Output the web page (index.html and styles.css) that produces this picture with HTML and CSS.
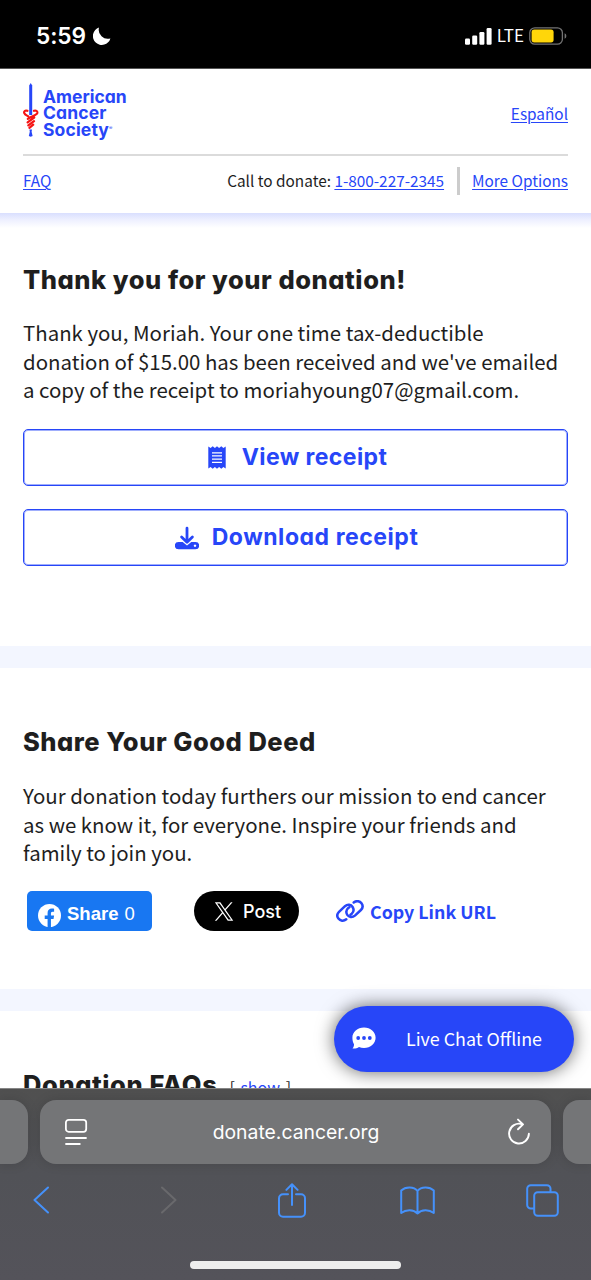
FILE: index.html
```html
<!DOCTYPE html>
<html lang="en">
<head>
<meta charset="utf-8">
<title>Thank you for your donation</title>
<link rel="stylesheet" href="styles.css">
</head>
<body>
<div class="phone">
  <div class="status">
    <div class="status-time"><span class="clock">5:59</span>
      <svg class="moon" viewBox="0 0 18 18"><path d="M6 .6A8.900 8.900 0 1 0 17.400 11.400 9 9 0 0 1 6 .6Z" fill="#fff"/></svg>
    </div>
    <div class="status-right">
      <svg class="signal" viewBox="0 0 27 17"><g fill="#fff"><rect x="0" y="10.500" width="5" height="6.200" rx="1.200"/><rect x="7.200" y="7.500" width="5" height="9.200" rx="1.200"/><rect x="14.400" y="4" width="5" height="12.700" rx="1.200"/><rect x="21.600" y="0" width="5" height="16.700" rx="1.200"/></g></svg>
      <span class="lte">LTE</span>
      <svg class="battery" viewBox="0 0 38 18"><rect x=".8" y=".8" width="32.600" height="16.400" rx="5" fill="none" stroke="#737373" stroke-width="1.300"/><rect x="2.600" y="2.600" width="22" height="12.800" rx="2.600" fill="#ffd60a"/><path d="M35.600 6.200Q37.400 7 37.400 9T35.600 11.800Z" fill="#737373"/></svg>
    </div>
  </div>

  <div class="viewport">
    <header class="header">
      <div class="header-top">
        <div class="logo">
          <svg class="sword" viewBox="0 0 16 54"><path d="M7.700 0 9.200 2.500V32H6.200V2.500Z" fill="#2746f8"/><path d="M6.400 46.500h2.600l-.4 2.200 1 4.200-1.900.8-1.900-.8 1-4.200Z" fill="#2746f8"/><g fill="none" stroke="#f51414" stroke-width="2.200" stroke-linecap="round"><path d="M4.400 27.800C2 27 .8 28.400 1.200 30c.4 1.600 2 2.300 4 3.300M11 27.800c2.400-.8 3.600.6 3.300 2.200-.5 2.300-5.500 2.800-9.500 5.800M11.200 34.500 4.600 39.300M11 38.100 5.300 42.400M10.200 41.700 6.400 44.900"/></g></svg>
          <div class="logo-text"><span class="l1">American</span><span class="l2">Cancer</span><span class="l3">Society<i>®</i></span></div>
        </div>
        <a class="link">Español</a>
      </div>
      <div class="header-bottom">
        <a class="link">FAQ</a>
        <div class="contact"><span class="call">Call to donate: <a class="link phone-link">1-800-227-2345</a></span><span class="more"><a class="link">More Options</a></span></div>
      </div>
    </header>

    <main>
      <section class="thanks">
        <h2 class="h-thanks">Thank you for your donation!</h2>
        <p>Thank you, Moriah. Your one time tax-deductible<br>donation of $15.00 has been received and we've emailed<br>a copy of the receipt to moriahyoung07@gmail.com.</p>
        <a class="button view"><svg class="receipt" viewBox="0 0 18 23"><path fill="#2746f8" fill-rule="evenodd" d="M.3.4 2.600 1.900 4.700.2 6.900 1.900 9 .2l2.100 1.700L13.300.2l2.100 1.700L17.700.4v22.200l-2.300-1.500-2.100 1.700-2.200-1.700L9 22.800l-2.100-1.700-2.200 1.700-2.100-1.700-2.300 1.500ZM4 6.200v1.300h10V6.200ZM4 9.300v1.300h10V9.300ZM4 12.500v1.300h10v-1.300ZM4 15.700V17h10v-1.300Z"/></svg><span class="t-view">View receipt</span></a>
        <a class="button download"><svg class="dl" viewBox="0 0 24 24"><path d="M12 2.200V16M6.600 11 12 16.200 17.400 11" fill="none" stroke="#2746f8" stroke-width="2.800" stroke-linecap="round" stroke-linejoin="round"/><path fill="#2746f8" fill-rule="evenodd" d="M3.500 16h4.200L12 19.600 16.300 16h4.200a3.500 3.500 0 0 1 0 7.300h-17a3.500 3.500 0 0 1 0-7.300ZM20 18.500a1.200 1.200 0 1 0 .01 0Z"/></svg><span class="t-dl">Download receipt</span></a>
      </section>
      <section class="share">
        <h2 class="h-share">Share Your Good Deed</h2>
        <p>Your donation today furthers our mission to end cancer<br>as we know it, for everyone. Inspire your friends and<br>family to join you.</p>
        <div class="social">
          <a class="fb"><svg viewBox="0 0 24 24"><circle cx="12" cy="12" r="12" fill="#fff"/><path fill="#1877f2" d="M10 24v-8.300H7V12.100h3V9.500C10 6.500 11.800 4.800 14.500 4.800c1.300 0 2.300.2 2.300.2v3h-1.500c-1.500 0-1.800.9-1.800 1.900v2.200h3.300l-.6 3.600h-2.700V24Z"/></svg><b>Share</b><span>0</span></a>
          <a class="post"><svg viewBox="0 0 24 24"><path fill="#fff" d="M14.100 10.300 22.300 1h-2l-7.100 8L7.600 1H1l8.600 12.300L1 23h2l7.500-8.600L16.500 23h6.600ZM3.700 2.400h3L20.400 21.600h-3Z"/></svg><span>Post</span></a>
          <a class="copy"><svg viewBox="0 0 28 22"><g fill="none" stroke="#2746f8" stroke-width="2.500" stroke-linecap="round"><path d="M10.300 19.300C7.600 21.600 4.200 21 2.400 18.600.8 16.400 1.200 13.700 3 11.900L9 6.200C11.600 3.900 15 4.500 16.600 7c1.400 2.300 1 5-.8 6.700l-1.300 1.100"/><path d="M17.700 2.500C20.400.3 23.700.9 25.500 3.300c1.600 2.200 1.200 4.900-.6 6.700l-6 5.600c-2.600 2.300-6 1.700-7.600-.7-1.400-2.300-1-5 .8-6.700l1.300-1.100"/></g></svg><span>Copy Link URL</span></a>
        </div>
      </section>
      <section class="faqs"><h2 class="h-faq">Donation FAQs</h2><span class="show">[ <a>show</a> ]</span></section>
    </main>
    <div class="chat"><svg viewBox="0 0 24 22"><path fill="#fff" d="M12 .5c6.500 0 11.600 4.500 11.600 10.200S18.500 21 12 21c-1.800 0-3.500-.3-5-1C5 21.300 2.800 21.900.5 21.500c1.200-1.400 1.500-2.600 1.500-4.200C.9 15.400.4 13 .4 10.700.4 5 5.500.5 12 .5Z"/><g fill="#2746f8"><circle cx="6.200" cy="11" r="1.900"/><circle cx="12" cy="11" r="1.900"/><circle cx="17.800" cy="11" r="1.900"/></g></svg><span>Live Chat Offline</span></div>
  </div>

  <footer class="browser">
    <div class="tabs">
      <div class="tab-left"></div>
      <div class="address">
        <svg class="reader" viewBox="0 0 24 28"><g fill="none" stroke="#fff" stroke-width="1.800" stroke-linecap="round"><rect x="1.900" y="1.800" width="20.300" height="12" rx="2.800"/><path d="M2 20H22M2 26H15.800"/></g></svg>
        <span class="domain">donate.cancer.org</span>
        <svg class="reload" viewBox="0 0 24 28"><g fill="none" stroke="#fff" stroke-width="1.900" stroke-linecap="round" stroke-linejoin="round"><path d="M14.800 6.100A9.900 9.900 0 1 0 21.900 15.800M11 1.600 16 6.400 11 11.300"/></g></svg>
      </div>
      <div class="tab-right"></div>
    </div>
    <div class="toolbar">
      <svg class="i-back" viewBox="0 0 16 28"><path d="M15 1.500 1.500 14 15 26.500"/></svg>
      <svg class="i-fwd" viewBox="0 0 16 28"><path d="M1 1.500 14.500 14 1 26.500"/></svg>
      <svg class="i-share" viewBox="0 0 28 35"><path d="M10 11.200H5a4 4 0 0 0-4 4V29.700a4 4 0 0 0 4 4H23a4 4 0 0 0 4-4V15.200a4 4 0 0 0-4-4H18M14 22V1.500M8.400 6.900 14 1.300 19.600 6.900"/></svg>
      <svg class="i-book" viewBox="0 0 35 29"><path d="M17.500 27.500V5C14 .3 5.500.3 1.200 4.500V27C6 23.200 13.500 23.200 17.500 27.500 21.500 23.200 29 23.200 33.800 27V4.500C29.500.3 21 .3 17.500 5"/></svg>
      <svg class="i-tabs" viewBox="0 0 33 33"><path d="M24.500 8V4.800A3.600 3.600 0 0 0 20.900 1.200H4.800A3.600 3.600 0 0 0 1.200 4.800V20.900a3.600 3.600 0 0 0 3.600 3.600H8"/><rect x="8.200" y="8.200" width="23.600" height="23.600" rx="3.500"/></svg>
    </div>
    <div class="home"></div>
  </footer>
</div>
</body>
</html>
```
FILE: styles.css
```css
* { box-sizing: border-box; }
body { margin: 0; background: #fff; color: #1e1e1e; font-family: "Noto Sans CJK SC", "Noto Sans", sans-serif; }
svg { display: block; flex: none; }
.phone { width: 591px; height: 1280px; display: flex; flex-direction: column; overflow: hidden; }

.status { height: 69px; flex: none; background: #000; color: #fff; display: flex; justify-content: space-between; padding: 23px 24px 0 36px; border-bottom: 1px solid #555; font-family: Inter, sans-serif; }
.status-time, .status-right { display: flex; height: 26px; align-items: center; }
.clock { font-size: 22.700px; font-weight: 600; letter-spacing: -.1px; padding-bottom: 1px; }
.moon { width: 18px; height: 18px; margin-left: 7px; }
.signal { width: 27px; height: 17px; }
.lte { font-family: "Noto Sans CJK SC", sans-serif; font-size: 17px; line-height: 26px; font-weight: 400; margin: 0 5px 0 5px; padding-bottom: 2px; }
.battery { width: 38px; height: 18px; }

.viewport { flex: 1; min-height: 0; position: relative; overflow: hidden; }
.header { height: 144px; padding: 0 23px; }
.header-top { height: 87px; border-bottom: 2px solid #dbdbdb; display: flex; justify-content: space-between; padding-top: 14px; }
.logo { display: flex; }
.sword { width: 16px; height: 54px; }
.logo-text { color: #2746f8; font: 700 17.500px/16.300px Inter, sans-serif; font-feature-settings: "cv11"; display: flex; flex-direction: column; padding: 6px 0 0 4px; }
.l2, .l3 { letter-spacing: .15px; }
.logo-text i { font: 5px/1 Inter, sans-serif; vertical-align: 6px; }
.link { color: #2746f8; text-decoration: underline; text-decoration-thickness: 1px; text-underline-offset: 2px; font-size: 15.350px; line-height: 24px; }
.header-top > .link { margin-top: 18px; }
.header-bottom { display: flex; justify-content: space-between; padding-top: 11px; align-items: center; }
.header-bottom > .link { padding-bottom: 2px; }
.contact { display: flex; align-items: center; font-size: 15.350px; line-height: 26px; }
.call { padding: 0 13px 2px 0; }
.more { border-left: 3px solid #ccc; padding: 0 0 2px 12px; }

h2 { margin: 0; font: 800 25.500px/36px Inter, sans-serif; font-feature-settings: "cv11"; color: #1e1e1e; white-space: nowrap; }
.h-thanks { letter-spacing: .54px; }
.h-share { letter-spacing: .52px; }
.h-faq { letter-spacing: .58px; }
p { margin: 0; font-size: 20.430px; line-height: 28.700px; white-space: nowrap; }
.thanks { height: 433px; padding: 49px 23px 0; background: linear-gradient(#d9dffe, #eef0ff 7px, #fff 15px); }
.thanks p { padding-top: 20px; }
.share p { padding-top: 21px; }
.button { height: 57px; border: 1px solid #2746f8; box-shadow: inset 0 0 0 1px #2746f870; background: #fff; border-radius: 5px; color: #2746f8; display: flex; align-items: center; justify-content: center; font: 700 23px/52px Inter, sans-serif; font-feature-settings: "cv11"; }
.t-view { letter-spacing: .4px; padding-bottom: 1px; }
.t-dl { letter-spacing: .55px; padding-bottom: 1px; }
.view { margin-top: 25px; padding-left: 4px; }
.download { margin-top: 23px; padding-left: 2px; }
.receipt { width: 18px; height: 23px; margin-right: 16px; }
.dl { width: 24px; height: 24px; margin-right: 13px; }
.share { height: 365px; border-top: 22px solid #f3f6ff; border-bottom: 22px solid #f3f6ff; padding: 56px 23px 0; }
.social { display: flex; height: 40px; margin: 24px 0 0 4px; align-items: center; }
.fb { width: 125px; height: 40px; background: #1877f2; border-radius: 5px; color: #fff; display: flex; align-items: center; padding: 5px 0 0 11px; font: 18.500px/24px "Liberation Sans", Arial, sans-serif; }
.fb svg { width: 23px; height: 23px; margin-right: 6px; margin-top: 4px; }
.fb span { margin-left: 6px; }
.post { width: 105px; height: 40px; margin-left: 42px; background: #000; border-radius: 20px; color: #fff; display: flex; align-items: center; padding-left: 20px; font: 500 18px/24px Inter, sans-serif; }
.post svg { width: 20px; height: 21px; margin-right: 9px; }
.post span { padding-top: 2px; }
.copy { margin-left: 37px; display: flex; align-items: center; color: #2746f8; font-size: 17.800px; font-weight: 700; line-height: 26px; }
.copy svg { width: 28px; height: 22px; margin-right: 6px; }
.faqs { display: flex; padding: 56px 23px 0; align-items: baseline; }
.show { font-size: 16px; margin-left: 12px; line-height: 24px; word-spacing: 2px; }
.show a { color: #2746f8; text-decoration: underline; }
.chat { position: absolute; left: 334px; top: 937px; width: 240px; height: 66px; border-radius: 33px; background: #2746f8; color: #fff; display: flex; align-items: center; padding: 0 0 2px 18px; box-shadow: 0 0 18px #0009; font-size: 17.850px; }
.chat svg { width: 24px; height: 22px; margin-right: 30px; }

.browser { height: 192px; flex: none; position: relative; background: linear-gradient(#505050, #515257 45%, #54535a); border-top: 1px solid #858585; color: #fff; }
.tabs { display: flex; gap: 12px; height: 75px; padding-top: 11px; }
.tabs > div { height: 64px; background: #747577; box-shadow: 0 0 12px #0002; }
.tab-left { width: 28px; border-radius: 0 16px 16px 0; }
.address { width: 511px; border-radius: 16px; display: flex; align-items: center; justify-content: space-between; padding: 0 20px 0 24px; }
.tab-right { flex: 1; border-radius: 16px 0 0 16px; }
.reader { width: 24px; height: 28px; }
.reload { width: 24px; height: 28px; }
.domain { font: 400 19.350px/28px Inter, sans-serif; padding-right: 3px; }
.toolbar { height: 72px; display: flex; align-items: center; padding-left: 33px; }
.toolbar svg { fill: none; stroke: #4591fa; stroke-width: 2; stroke-linecap: round; stroke-linejoin: round; }
.i-back, .i-fwd { width: 16px; height: 28px; }
.i-fwd { margin-left: 112px; }
.toolbar .i-fwd { stroke: #69696c; }
.i-share { width: 28px; height: 35px; margin-left: 101px; }
.i-book { width: 35px; height: 29px; margin-left: 94px; }
.i-tabs { width: 33px; height: 33px; margin-left: 91px; }
.home { width: 211px; height: 8px; margin: 25px auto 0; border-radius: 4px; background: #eee; }
```
